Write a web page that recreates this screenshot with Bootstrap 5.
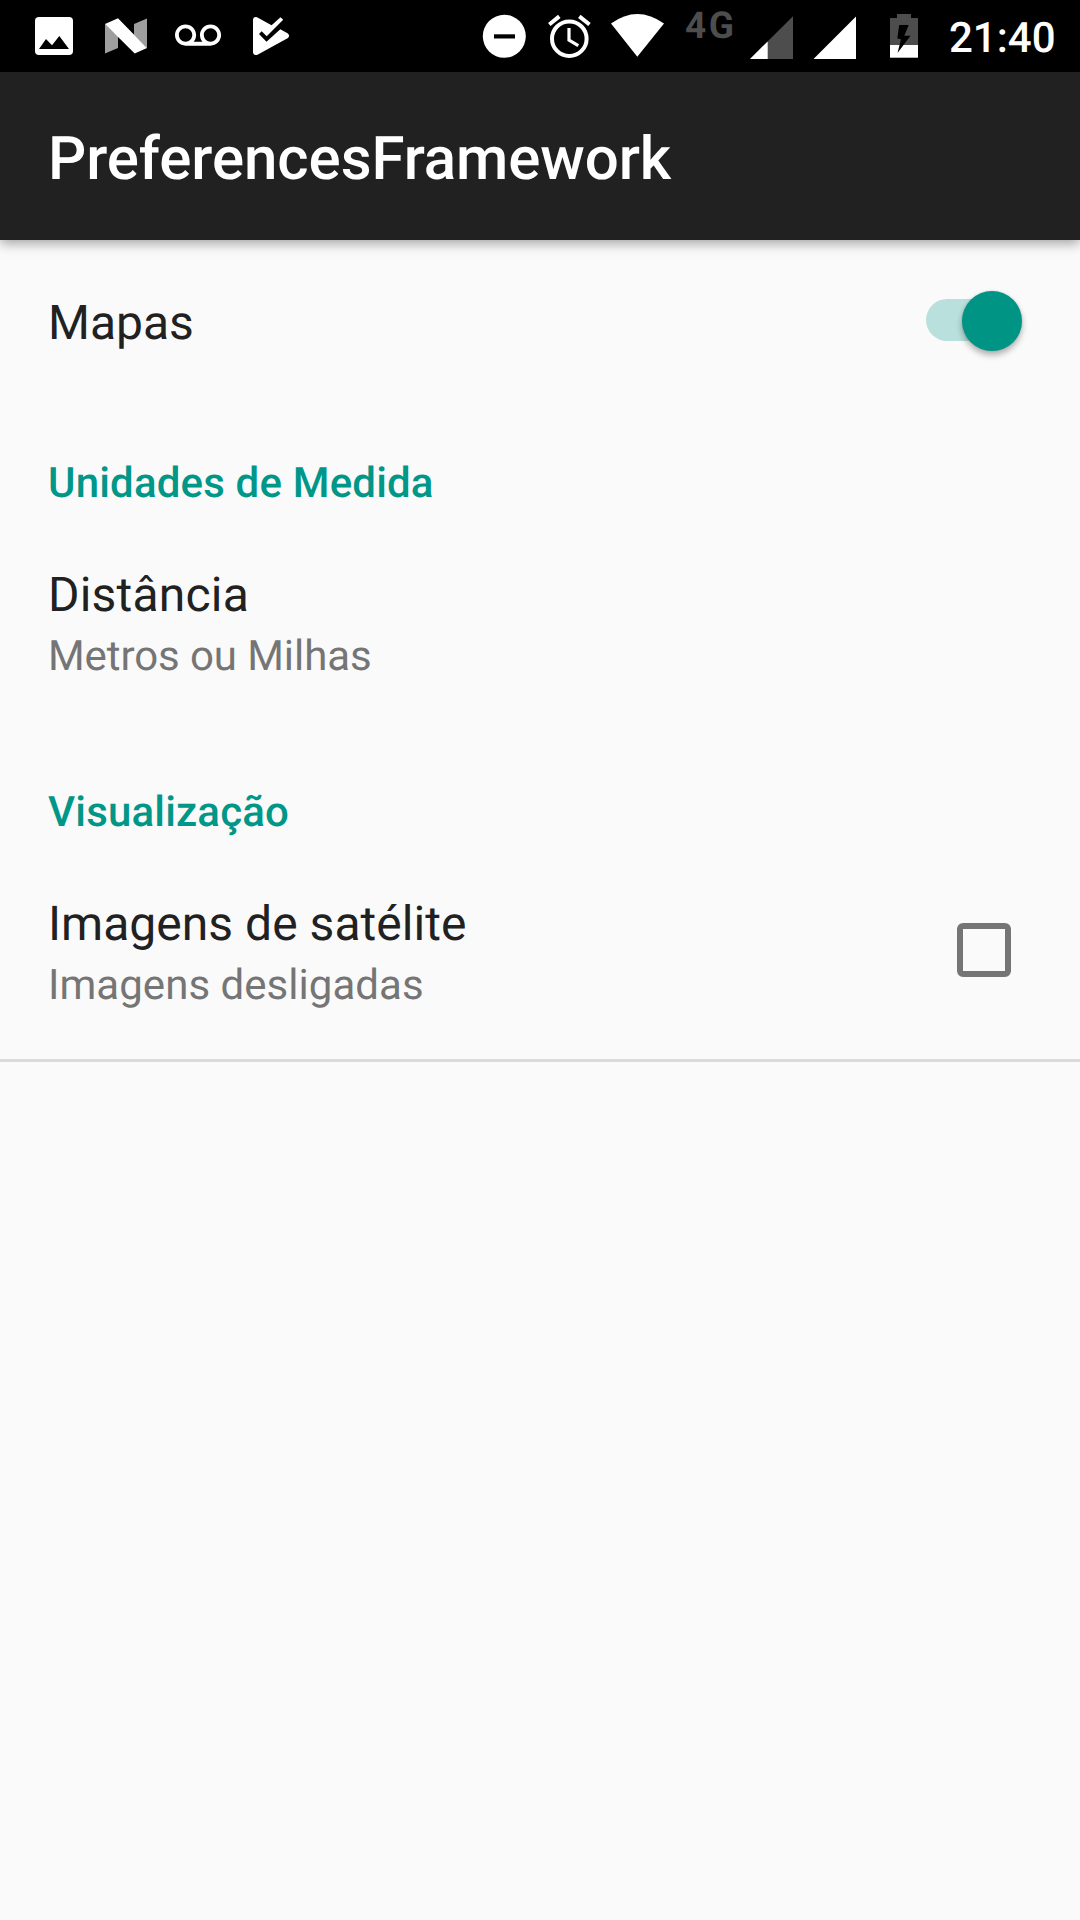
<!DOCTYPE html>
<html lang="pt-BR">
<head>
<meta charset="utf-8">
<meta name="viewport" content="width=device-width, initial-scale=1">
<title>PreferencesFramework</title>
<link href="https://cdn.jsdelivr.net/npm/bootstrap@5.3.0/dist/css/bootstrap.min.css" rel="stylesheet">
<style>
  body { font-family: Roboto, "Noto Sans", sans-serif; background: #fafafa; color: #212121; min-height: 1920px; overflow: hidden; text-rendering: geometricPrecision; }
  .status-bar { height: 72px; background: #000; color: #fff; padding-left: 29px; }
  .status-bar svg { display: block; height: 72px; flex: none; }
  .net-type { width: 66px; padding-left: 14px; padding-top: 5px; font-size: 37px; line-height: 44px; font-weight: 700; letter-spacing: 2.5px; color: #4d4d4d; }
  .clock { width: 132px; font-size: 42px; line-height: 49px; font-weight: 500; padding-top: 14px; padding-left: 1px; }
  .app-bar { height: 168px; background: #212121; padding: 0 48px; box-shadow: 0 3px 12px rgba(0,0,0,.38); position: relative; }
  .app-title { font-size: 60px; line-height: 70px; font-weight: 500; color: #fff; margin: 0; padding-top: 6px; letter-spacing: -.07px; }
  .pref-row { padding: 0 48px; }
  .row-map { height: 160px; padding-top: 3px; }
  .row-map .pref-title { padding-top: 2px; letter-spacing: 0; }
  .section-label { font-size: 42px; line-height: 49px; font-weight: 500; color: #009688; margin: 0; padding: 59px 48px 0; letter-spacing: .17px; }
  .pref-title { font-size: 48px; line-height: 56px; letter-spacing: .03px; }
  .title-distance { letter-spacing: .2px; }
  .pref-sub { font-size: 42px; line-height: 49px; color: #757575; margin-top: 9px; }
  .sub-distance { letter-spacing: -.08px; }
  .sub-images { letter-spacing: .04px; }
  .row-item { padding-top: 59px; padding-bottom: 48px; }
  .row-last { padding-bottom: 49px; }
  .toggle-track { width: 84px; height: 42px; border-radius: 21px; background: #b9e0dc; margin-right: 22px; position: relative; margin-top: -3px; }
  .toggle-thumb { position: absolute; width: 60px; height: 60px; border-radius: 50%; background: #009485; top: -8.5px; left: 35.5px; box-shadow: 0 4px 6px rgba(0,0,0,.3), 0 0 2px rgba(0,0,0,.15); }
  .form-check-input.sat-check { width: 54px; height: 54px; margin: 0 21px 6px 0; border: 6px solid #757575; border-radius: 6px; background-color: transparent; }
  .list-end { height: 3px; background: #dbdbdb; }
</style>
</head>
<body>
<div class="status-bar d-flex justify-content-between">
  <div class="d-flex">
    <svg width="60" viewBox="29 0 60 72"><rect x="35" y="17" width="38" height="38" rx="4" fill="#fff"/><path d="M39 49 46 39 52 45.3 59.3 36 69 49z"/></svg>
    <svg width="72" viewBox="89 0 72 72"><path fill="#9e9e9e" d="M105 24 118 36V48L105 53.5zM134 24 147 18.5V48L134 35z"/><path fill="#fff" d="M105 24 118 18.3 147 48 134.7 53.5z"/></svg>
    <svg width="78" viewBox="161 0 78 72"><path fill="#fff" transform="translate(175 13) scale(1.92)" d="M18.5 6C15.46 6 13 8.46 13 11.5c0 1.33.47 2.55 1.26 3.5H9.74c.79-.95 1.26-2.17 1.26-3.5C11 8.46 8.54 6 5.5 6S0 8.46 0 11.5 2.46 17 5.5 17h13c3.04 0 5.5-2.46 5.5-5.5S21.54 6 18.5 6zm-13 9C3.57 15 2 13.43 2 11.5S3.57 8 5.5 8 9 9.57 9 11.5 7.43 15 5.5 15zm13 0c-1.93 0-3.5-1.57-3.5-3.5S16.57 8 18.5 8 22 9.57 22 11.5 20.43 15 18.5 15z"/></svg>
    <svg width="60" viewBox="239 0 60 72"><path fill="#fff" d="M253 19.5Q253.3 16.5 257 17.2L271.6 25.2 280.5 17.2 283.2 19.8 266.7 36.2 261.7 31.3 259 34 266.5 41.8 280.3 29.2 287.5 33.2Q290.5 35.5 288 38L257.5 54.7Q253.5 56 253 52.5z"/></svg>
  </div>
  <div class="d-flex">
    <svg width="65" viewBox="474 0 65 72"><circle cx="504.3" cy="36.3" r="21.5" fill="#fff"/><path d="M494 34.3h21v4.2h-21z"/></svg>
    <svg width="62" viewBox="539 0 62 72"><g fill="none" stroke="#fff" stroke-width="4"><circle cx="569.3" cy="38.7" r="17.3"/><path d="M549.3 24.5 559.3 16.4M579.3 16.4 589.5 24.5"/><path stroke-width="3.2" d="M569 28V40L578.3 45.7"/></g></svg>
    <svg width="70" viewBox="601 0 70 72"><path fill="#fff" d="M611 23.5Q637.3 4.5 664 23.5L637.3 56.8z"/></svg>
    <span class="net-type">4G</span>
    <svg width="66" viewBox="737 0 66 72"><path fill="#4d4d4d" d="M750 59 793 16.3V59z"/><path fill="#fff" d="M750 59 767.7 41.4V59z"/></svg>
    <svg width="67" viewBox="803 0 67 72"><path fill="#fff" d="M813.5 59 856 16.5V59z"/></svg>
    <svg width="78" viewBox="870 0 78 72"><path fill="#4d4d4d" d="M897 14h14v4h7v27h-28V18h7z"/><path fill="#fff" d="M890 45h28v12.7h-28z"/><path d="M899.2 25H908.7L904.3 35.8H910.5L897.5 53 901 39.3 897.3 38.5z"/></svg>
    <time class="clock align-self-start">21:40</time>
  </div>
</div>
<header class="app-bar d-flex align-items-center"><h1 class="app-title">PreferencesFramework</h1></header>
<main>
  <div class="pref-row row-map d-flex align-items-center justify-content-between">
    <div class="pref-title">Mapas</div>
    <div class="toggle-track" role="switch" aria-checked="true" aria-label="Mapas"><span class="toggle-thumb"></span></div>
  </div>
  <h2 class="section-label">Unidades de Medida</h2>
  <div class="pref-row row-item">
    <div class="pref-title title-distance">Distância</div>
    <div class="pref-sub sub-distance">Metros ou Milhas</div>
  </div>
  <h2 class="section-label">Visualização</h2>
  <div class="pref-row row-item row-last d-flex align-items-center justify-content-between">
    <div>
      <div class="pref-title">Imagens de satélite</div>
      <div class="pref-sub sub-images">Imagens desligadas</div>
    </div>
    <input class="form-check-input sat-check" type="checkbox" aria-label="Imagens de satélite">
  </div>
  <div class="list-end"></div>
</main>
<script src="https://cdn.jsdelivr.net/npm/bootstrap@5.3.0/dist/js/bootstrap.bundle.min.js"></script>
</body>
</html>
